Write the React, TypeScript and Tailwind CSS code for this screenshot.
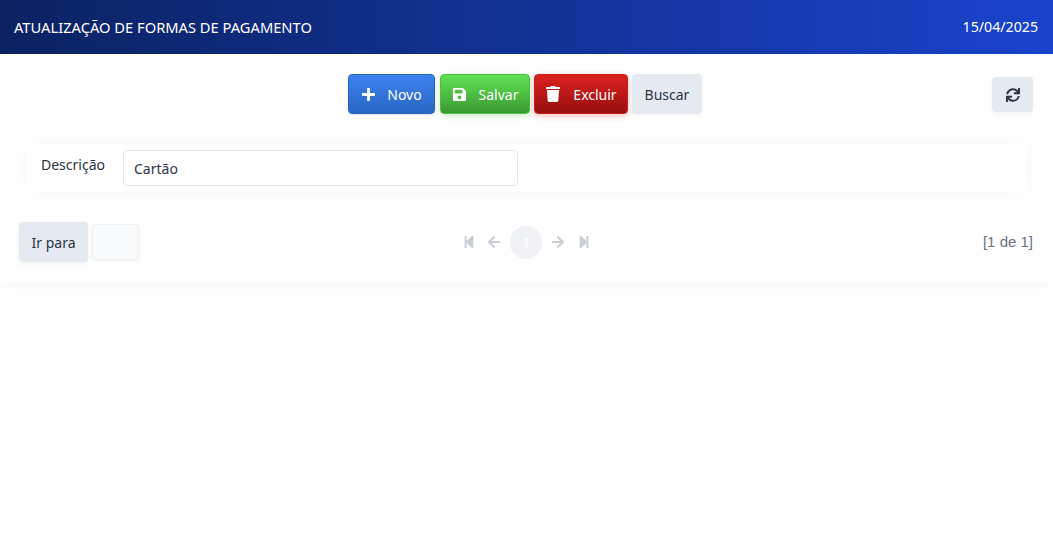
import { FaArrowLeft, FaArrowRight, FaPlus, FaSave, FaStepBackward, FaStepForward, FaSync, FaTrash } from "react-icons/fa";

export default function App() {
  return (
    <div className="min-h-[555px] bg-white font-['Noto_Sans',sans-serif] text-[14px] text-[#2b3544]">
      <header className="flex h-[54px] items-center justify-between bg-gradient-to-r from-[#0b2262] to-[#1a43cd] pl-[14px] pr-[15px] text-white">
        <span className="text-[14.7px]">ATUALIZAÇÃO DE FORMAS DE PAGAMENTO</span>
        <span className="text-[14.2px]">15/04/2025</span>
      </header>

      <main className="h-[228px] shadow-[0_6px_20px_rgba(0,0,0,0.03)]">
        <div className="grid grid-cols-[1fr_auto_1fr] pl-[17px] pr-5 pt-5">
          <div />
          <div className="flex h-10 gap-1">
            <button className="flex w-[87px] items-center justify-center gap-[11px] rounded border border-[#2563c9] bg-gradient-to-b from-[#3b82f0] to-[#2a67c4] text-white shadow-sm">
              <FaPlus size={15} />
              Novo
            </button>
            <button className="ml-px flex w-[90px] items-center justify-center gap-3 rounded border border-[#4cc044] bg-gradient-to-b from-[#62e252] to-[#3a9a33] text-white shadow-[0_2px_6px_rgba(60,190,60,0.25)]">
              <FaSave size={15} />
              Salvar
            </button>
            <button className="flex w-[94px] items-center justify-center gap-3 rounded border border-[#c81e1e] bg-gradient-to-b from-[#dc2020] to-[#980f0f] text-white shadow-[0_2px_6px_rgba(220,40,40,0.3)]">
              <FaTrash size={16} />
              Excluir
            </button>
            <button className="w-[70px] rounded bg-[#e5e9f0] shadow-[0_2px_6px_rgba(0,0,0,0.05)]">Buscar</button>
          </div>
          <div className="flex justify-end pt-[3px]">
            <button className="flex h-[35px] w-[41px] items-center justify-center rounded bg-[#e5e9f0] shadow-[0_2px_6px_rgba(0,0,0,0.05)]">
              <FaSync size={14} />
            </button>
          </div>
        </div>

        <section className="ml-[25px] mr-[26px] mt-[30px] flex h-12 bg-white pl-4 pt-[6px] shadow-[0_0_24px_rgba(0,0,0,0.04)]">
          <label className="w-[82px] pt-1">Descrição</label>
          <input
            readOnly
            value="Cartão"
            className="h-9 w-[395px] rounded border border-[#e5e7eb] bg-white px-[10px] outline-none"
          />
        </section>

        <div className="mt-[30px] flex h-10 items-center justify-between pl-[19px] pr-5">
          <div className="flex w-[120px] items-center gap-1">
            <button className="h-10 w-[69px] rounded bg-[#e5e9f0] shadow-[0_2px_6px_rgba(0,0,0,0.05)]">Ir para</button>
            <div className="h-9 w-[47px] rounded border border-[#eef0f3] bg-[#f9fafb] shadow-[0_1px_4px_rgba(0,0,0,0.05)]" />
          </div>
          <div className="flex items-center text-[#c9ced6]">
            <span className="flex w-[26px] justify-center"><FaStepBackward size={14} /></span>
            <span className="flex w-[24px] justify-center"><FaArrowLeft size={14} /></span>
            <span className="ml-1 mr-[2px] flex h-[33px] w-[32px] items-center justify-center rounded-full bg-[#eff1f5] font-semibold text-white">1</span>
            <span className="flex w-[27px] justify-center"><FaArrowRight size={14} /></span>
            <span className="flex w-[25px] justify-center"><FaStepForward size={14} /></span>
          </div>
          <div className="w-[120px] text-right font-['Liberation_Sans',sans-serif] text-[15px] text-[#6b7280]">[1 de 1]</div>
        </div>
      </main>
    </div>
  );
}
